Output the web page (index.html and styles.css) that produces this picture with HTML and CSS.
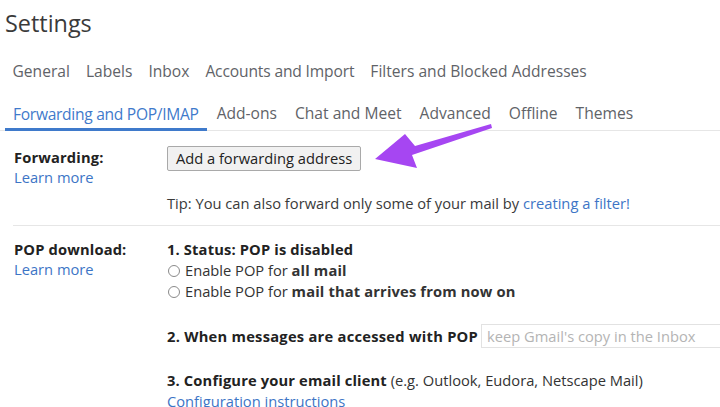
FILE: index.html
```html
<!DOCTYPE html>
<html>
<head>
<meta charset="utf-8">
<link rel="stylesheet" href="styles.css">
</head>
<body>
<div class="page">
  <h1 class="title">Settings</h1>
  <div class="tabs row1">
    <span class="tab">General</span>
    <span class="tab">Labels</span>
    <span class="tab">Inbox</span>
    <span class="tab">Accounts and Import</span>
    <span class="tab">Filters and Blocked Addresses</span>
  </div>
  <div class="tabs row2">
    <span class="tab active">Forwarding and POP/IMAP</span>
    <span class="tab">Add-ons</span>
    <span class="tab">Chat and Meet</span>
    <span class="tab">Advanced</span>
    <span class="tab">Offline</span>
    <span class="tab">Themes</span>
  </div>

  <div class="section fwd">
    <div class="label">
      <div class="bold">Forwarding:</div>
      <a class="link">Learn more</a>
    </div>
    <div class="content">
      <button class="btn">Add a forwarding address</button>
      <div class="tip">Tip: You can also forward only some of your mail by <a class="link">creating a filter!</a></div>
    </div>
  </div>

  <div class="section pop">
    <div class="label">
      <div class="bold">POP download:</div>
      <a class="link">Learn more</a>
    </div>
    <div class="content">
      <div class="line bold">1. Status: POP is disabled</div>
      <div class="line radio"><span class="circle"></span><span>Enable POP for <b>all mail</b></span></div>
      <div class="line radio"><span class="circle"></span><span>Enable POP for <b>mail that arrives from now on</b></span></div>
      <div class="when"><span class="bold wide">2. When messages are accessed with POP</span><span class="select">keep Gmail's copy in the Inbox</span></div>
      <div class="line cfg"><span class="bold">3. Configure your email client</span> (e.g. Outlook, Eudora, Netscape Mail)</div>
      <div class="line"><a class="link">Configuration instructions</a></div>
    </div>
  </div>

  <svg class="arrow" width="720" height="407" viewBox="0 0 720 407">
    <polygon points="491,124 415,146 405,134 375,159 417,168 412,155 492,128" fill="#a646f2"/>
  </svg>
</div>
</body>
</html>
```

FILE: styles.css
```css
html, body {
  margin: 0;
  padding: 0;
  background: #ffffff;
}
body {
  font-family: "Open Sans", Roboto, sans-serif;
  font-size: 14.7px;
  color: #222222;
  width: 720px;
  height: 407px;
  overflow: hidden;
}
.page {
  position: relative;
  width: 720px;
  height: 407px;
  overflow: hidden;
}
.title {
  margin: 0;
  padding: 8px 0 0 5px;
  height: 50px;
  box-sizing: border-box;
  font-size: 23.4px;
  font-weight: 400;
  color: #3a3a3a;
  line-height: 30px;
}
.tabs {
  display: flex;
  padding-left: 5px;
  gap: 1px;
  font-size: 15.6px;
  color: #5f6368;
}
.row1 {
  height: 42px;
  align-items: center;
}
.row2 {
  height: 39px;
  align-items: flex-end;
  border-bottom: 1px solid #e6e6e6;
  box-sizing: border-box;
}
.tab {
  padding: 0 7.5px;
  line-height: 20px;
  white-space: nowrap;
}
.row1 .tab:nth-child(4) {
  letter-spacing: -0.15px;
}
.row2 .tab {
  padding: 0 8.5px 7px;
}
.row2 .tab.active {
  color: #3f7acb;
  border-bottom: 3px solid #3f7acb;
  padding: 0 8.5px 4px 8px;
  margin-bottom: -1px;
  letter-spacing: -0.3px;
}
.section {
  display: grid;
  grid-template-columns: 153px 1fr;
  padding-left: 14px;
  line-height: 20px;
}
.fwd {
  padding-top: 15px;
  padding-bottom: 12px;
  margin-left: 13px;
  padding-left: 1px;
  border-bottom: 1px solid #e6e6e6;
}
.fwd .label {
  padding-top: 1px;
}
.pop {
  padding-top: 13px;
}
.bold, b {
  font-weight: 700;
  letter-spacing: 0.15px;
}
.wide {
  letter-spacing: 0.26px;
}
.link {
  color: #3d75c6;
  text-decoration: none;
}
.label .link {
  display: block;
}
.btn {
  font-family: inherit;
  font-size: 14.7px;
  color: #222;
  background: #f1f1f1;
  border: 1px solid #a9a9a9;
  border-radius: 2px;
  height: 25px;
  width: 194px;
  padding: 0;
  line-height: 23px;
  display: block;
}
.tip {
  margin-top: 22px;
  color: #3a3a3a;
}
.line {
  line-height: 21px;
}
.radio {
  display: flex;
  align-items: center;
  color: #333;
}
.circle {
  width: 10px;
  height: 10px;
  border: 1px solid #8a8a8a;
  border-radius: 50%;
  margin: 0 5px 0 1px;
  flex: none;
}
.when {
  display: flex;
  align-items: center;
  margin-top: 22px;
  height: 24px;
  white-space: nowrap;
}
.select {
  margin-left: 3px;
  height: 24px;
  box-sizing: border-box;
  border: 1px solid #e2e2e2;
  padding: 0 5px;
  line-height: 22px;
  color: #b4b4b4;
  font-weight: 400;
  width: 300px;
  flex: none;
}
.cfg {
  margin-top: 22px;
  white-space: nowrap;
  color: #333;
}
.cfg .bold {
  color: #222;
}
.arrow {
  position: absolute;
  left: 0;
  top: 0;
  pointer-events: none;
}
```
